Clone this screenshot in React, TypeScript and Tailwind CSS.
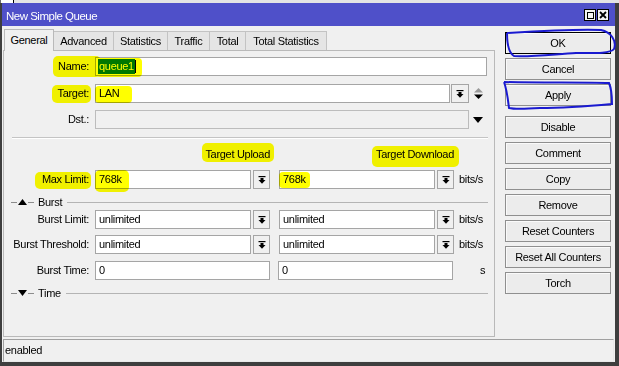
import React from "react";

function DropIcon() {
  return (
    <svg width="8" height="8" viewBox="0 0 8 8">
      <rect x="0.5" y="0" width="7" height="1.2" fill="#000" />
      <rect x="2.5" y="2" width="3" height="2" fill="#000" />
      <path d="M0.5 4 H7.5 L4 7.8 Z" fill="#000" />
    </svg>
  );
}

function DropBtn() {
  return (
    <div className="ml-[2px] w-[17px] h-[19px] border border-[#a5a5a5] bg-[#f0f0f0] flex items-center justify-center">
      <DropIcon />
    </div>
  );
}

function Label({ text }: { text: string }) {
  return <span className="w-[85px] mr-[6px] text-right whitespace-nowrap">{text}</span>;
}

function Section({ title, open }: { title: string; open: boolean }) {
  return (
    <div className="flex items-center h-[12px] mt-[7px]">
      <div className="ml-[7px] w-[6px] h-px bg-[#8c8c8c]" />
      <svg width="9" height="6" viewBox="0 0 9 6" className="ml-[1px]">
        {open ? <path d="M0 6 H9 L4.5 0 Z" fill="#000" /> : <path d="M0 0 H9 L4.5 6 Z" fill="#000" />}
      </svg>
      <div className="ml-[1px] w-[6px] h-px bg-[#8c8c8c]" />
      <span className="ml-[4px]">{title}</span>
      <div className="flex-1 ml-[5px] mr-[6px] h-px bg-[#b4b4b4]" />
    </div>
  );
}

function RateRow({ label, a, b, mt }: { label: string; a: string; b: string; mt: string }) {
  return (
    <div className={`flex items-center h-[19px] ${mt}`}>
      <Label text={label} />
      <div className="w-[156px] h-[19px] border border-[#a5a5a5] bg-white flex items-center pl-[3px]">{a}</div>
      <DropBtn />
      <div className="ml-[9px] w-[156px] h-[19px] border border-[#a5a5a5] bg-white flex items-center pl-[3px]">{b}</div>
      <DropBtn />
      <span className="ml-[5px]">bits/s</span>
    </div>
  );
}

const tabs = ["Advanced", "Statistics", "Traffic", "Total", "Total Statistics"];
const tabW = ["w-[60px]", "w-[54px]", "w-[42px]", "w-[36px]", "w-[81px]"];

const buttons = ["OK", "Cancel", "Apply", "Disable", "Comment", "Copy", "Remove", "Reset Counters", "Reset All Counters", "Torch"];

export default function App() {
  return (
    <div className="relative isolate w-[619px] h-[366px] overflow-hidden bg-[#f0f0f0] text-black text-[11px] leading-[13px] tracking-[-0.3px] font-['Liberation_Sans',Arial,sans-serif]">
      {/* strip above the window */}
      <div className="flex h-[3px]">
        <div className="w-[1px] bg-[#6d6d6d]" />
        <div className="w-[12px] bg-white" />
        <div className="w-[1px] bg-black" />
        <div className="flex-1 bg-[#e4e4e4]" />
      </div>

      <div className="flex flex-col h-[363px] border-l-2 border-r-4 border-b-4 border-[#3e3e3e]">
        {/* title bar */}
        <div className="h-[23px] bg-[#4f50c9] flex items-center pl-[4px] pr-[6px]">
          <span className="text-white text-[11.5px] tracking-[-0.5px] pt-[3px]">New Simple Queue</span>
          <div className="ml-auto flex gap-[1px] pt-[1px]">
            <div className="w-[12px] h-[12px] border border-black bg-[#f4f4f4] flex items-center justify-center">
              <div className="w-[7px] h-[7px] border border-black" />
            </div>
            <div className="w-[12px] h-[12px] border border-black bg-[#f4f4f4] flex items-center justify-center">
              <svg width="8" height="8" viewBox="0 0 8 8">
                <path d="M1 1 L7 7 M7 1 L1 7" stroke="#000" strokeWidth="1.8" />
              </svg>
            </div>
          </div>
        </div>

        {/* body */}
        <div className="flex">
          <div className="ml-[1px] w-[492px] pt-[2px] flex flex-col">
            <div className="flex items-end h-[22px]">
              <div className="w-[50px] h-[22px] ml-[1px] border border-b-0 border-[#b9b9b9] bg-[#f0f0f0] flex items-center justify-center relative z-10 -mb-px pb-px">
                General
              </div>
              {tabs.map((t, i) => (
                <div
                  key={t}
                  className={`${tabW[i]} h-[19px] border border-l-0 border-b-0 border-[#c3c3c3] bg-[#e5e5e5] flex items-center justify-center whitespace-nowrap`}
                >
                  {t}
                </div>
              ))}
            </div>

            {/* panel */}
            <div className="h-[287px] border border-[#b9b9b9] bg-[#f0f0f0] flex flex-col">
              <div className="flex items-center h-[19px] mt-[6px]">
                <Label text="Name:" />
                <div className="w-[392px] h-[19px] border border-[#a5a5a5] bg-white flex items-center pl-[2px]">
                  <span className="bg-[#0078d7] text-white px-[1px] py-[1px]">queue1</span>
                  <span className="w-px h-[13px] bg-black" />
                </div>
              </div>

              <div className="flex items-center h-[19px] mt-[8px]">
                <Label text="Target:" />
                <div className="w-[355px] h-[19px] border border-[#a5a5a5] bg-white flex items-center pl-[3px]">LAN</div>
                <div className="ml-[1px] w-[18px] h-[19px] border border-[#a5a5a5] bg-[#f0f0f0] flex items-center justify-center">
                  <DropIcon />
                </div>
                <svg width="11" height="13" viewBox="0 0 11 13" className="ml-[4px]">
                  <path d="M1 5.5 H10 L5.5 1 Z" fill="#9a9a9a" />
                  <path d="M1 7.5 H10 L5.5 12 Z" fill="#000" />
                </svg>
              </div>

              <div className="flex items-center h-[19px] mt-[7px]">
                <Label text="Dst.:" />
                <div className="w-[374px] h-[19px] border border-[#bcbcbc] bg-[#f0f0f0]" />
                <svg width="10" height="6" viewBox="0 0 10 6" className="ml-[4px]">
                  <path d="M0 0 H10 L5 6 Z" fill="#000" />
                </svg>
              </div>

              <div className="mt-[8px] ml-[8px] mr-[6px] h-[2px] border-t border-[#c4c4c4] border-b border-b-white" />

              <div className="flex items-center h-[14px] mt-[8px]">
                <div className="w-[91px]" />
                <div className="w-[175px] text-right">Target Upload</div>
                <div className="w-[9px]" />
                <div className="w-[175px] text-right">Target Download</div>
              </div>

              <RateRow label="Max Limit:" a="768k" b="768k" mt="mt-[9px]" />

              <Section title="Burst" open={true} />

              <RateRow label="Burst Limit:" a="unlimited" b="unlimited" mt="mt-[2px]" />
              <RateRow label="Burst Threshold:" a="unlimited" b="unlimited" mt="mt-[6px]" />

              <div className="flex items-center h-[19px] mt-[7px]">
                <Label text="Burst Time:" />
                <div className="w-[175px] h-[19px] border border-[#a5a5a5] bg-white flex items-center pl-[3px]">0</div>
                <div className="ml-[8px] w-[175px] h-[19px] border border-[#a5a5a5] bg-white flex items-center pl-[3px]">0</div>
                <span className="ml-[27px]">s</span>
              </div>

              <Section title="Time" open={false} />
            </div>
          </div>

          {/* buttons */}
          <div className="ml-[10px] w-[106px] pt-[6px] flex flex-col">
            {buttons.map((b, i) => (
              <div
                key={b}
                className={`h-[22px] border ${i === 0 ? "border-black" : "border-[#8f8f8f]"} bg-[#ececec] shadow-[inset_1px_1px_0_#fafafa] flex items-center justify-center whitespace-nowrap ${
                  i === 0 ? "" : i === 3 ? "mt-[10px]" : "mt-[4px]"
                }`}
              >
                {b}
              </div>
            ))}
          </div>
        </div>

        {/* status bar */}
        <div className="ml-[1px] mt-[2px] w-[611px] h-[23px] border border-[#a0a0a0] border-r-[#e8e8e8] border-b-[#e8e8e8] bg-[#f0f0f0] flex items-center pl-[1px]">
          enabled
        </div>
      </div>

      {/* yellow marker annotations */}
      <div className="pointer-events-none absolute inset-0 mix-blend-multiply">
        <div className="absolute left-[53px] top-[56px] w-[48px] h-[21px] rounded-[5px] bg-[#ffff00]" />
        <div className="absolute left-[96px] top-[58px] w-[46px] h-[19px] rounded-[4px] bg-[#ffff00]" />
        <div className="absolute left-[52px] top-[85px] w-[39px] h-[18px] rounded-[5px] bg-[#ffff00]" />
        <div className="absolute left-[95px] top-[86px] w-[37px] h-[17px] rounded-[4px] bg-[#ffff00]" />
        <div className="absolute left-[202px] top-[143px] w-[72px] h-[19px] rounded-[5px] bg-[#ffff00]" />
        <div className="absolute left-[372px] top-[146px] w-[87px] h-[21px] rounded-[5px] bg-[#ffff00]" />
        <div className="absolute left-[35px] top-[172px] w-[56px] h-[17px] rounded-[5px] bg-[#ffff00]" />
        <div className="absolute left-[95px] top-[170px] w-[34px] h-[22px] rounded-[5px] bg-[#ffff00]" />
        <div className="absolute left-[279px] top-[172px] w-[31px] h-[16px] rounded-[4px] bg-[#ffff00]" />
      </div>

      {/* blue pen annotations */}
      <svg className="pointer-events-none absolute inset-0" width="619" height="366" viewBox="0 0 619 366">
        <path
          d="M507 33 C 540 31, 580 29, 601 30 C 611 32, 617 41, 614 49 C 610 54, 592 53, 576 53 C 556 54, 532 57, 514 56 C 509 53, 507 45, 507 33"
          fill="none"
          stroke="#1a1ad0"
          strokeWidth="2"
        />
        <path
          d="M504 82 C 540 83, 585 82, 609 83 C 612 90, 612 98, 612 104 C 590 106, 560 108, 540 108 C 525 109, 513 109, 509 108 C 508 100, 507 90, 504 82"
          fill="none"
          stroke="#1a1ad0"
          strokeWidth="2"
        />
      </svg>
    </div>
  );
}
